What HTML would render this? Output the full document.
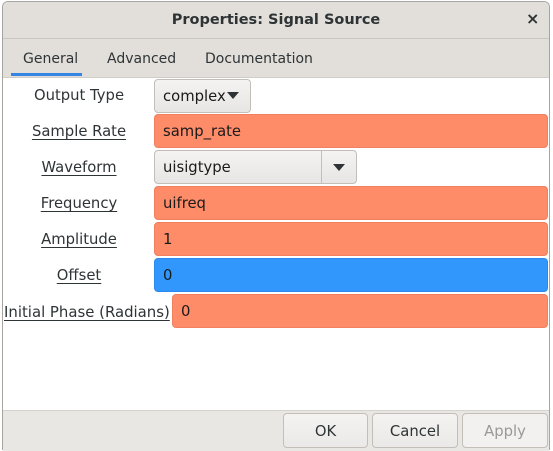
<!DOCTYPE html><html><head><style>
body{margin:0;width:553px;height:451px;background:#fff;font-family:"DejaVu Sans","Liberation Sans",sans-serif;font-size:14.8px;color:#2e3436;position:relative;overflow:hidden}
.a{position:absolute}
.win{left:2px;top:1px;width:548px;height:449px;border:1px solid #a8a5a0;border-radius:6px 6px 0 0;background:#fff;box-sizing:border-box}
.f{position:absolute;height:34px;border-radius:4px;box-sizing:border-box;padding-left:8px;line-height:34px;color:#1a1a1a}
.o{background:#ff8c69;border:1px solid #f08060}
.l{position:absolute;text-decoration:underline;text-underline-offset:3px;text-align:center;width:150px;left:4px}
.btn{position:absolute;top:413px;height:35px;border:1px solid #c3beb8;border-radius:4px;background:linear-gradient(#f4f3f2,#ebe9e7);box-sizing:border-box;text-align:center;line-height:35px}
.t{font-size:14px;top:51px}
</style></head><body>
<div class="a win"></div>
<div class="a" style="left:3px;top:2px;width:546px;height:36px;background:#e2dfdb;border-radius:6px 6px 0 0;border-bottom:1px solid #c9c5c0;text-align:center;line-height:36px;font-weight:bold;font-size:14.5px">Properties: Signal Source</div>
<div class="a" style="left:526px;top:9px;font-weight:bold;font-size:16px">×</div>
<div class="a" style="left:3px;top:39px;width:546px;height:38px;background:#e2dfdb;border-bottom:1px solid #d0ccc7"></div>
<div class="a t" style="left:23px">General</div>
<div class="a" style="left:11px;top:73px;width:71px;height:3px;background:#3584e4"></div>
<div class="a t" style="left:107px">Advanced</div>
<div class="a t" style="left:205px">Documentation</div>
<div class="a" style="left:4px;width:150px;text-align:center;top:87px">Output Type</div>
<div class="f" style="left:154px;top:79px;width:97px;background:linear-gradient(#f4f3f2,#e8e6e4);border:1px solid #c3beb8">complex</div>
<svg class="a" style="left:227px;top:92px" width="12" height="7"><path d="M0 0H12L6 7Z" fill="#2e3436"/></svg>
<div class="l" style="top:123px">Sample Rate</div>
<div class="f o" style="left:154px;top:114px;width:394px">samp_rate</div>
<div class="l" style="top:159px">Waveform</div>
<div class="f" style="left:154px;top:150px;width:203px;background:linear-gradient(#f4f3f2,#e8e6e4);border:1px solid #c3beb8">uisigtype</div>
<div class="a" style="left:321px;top:151px;width:1px;height:32px;background:#c3beb8"></div>
<svg class="a" style="left:333px;top:164px" width="12" height="7"><path d="M0 0H12L6 7Z" fill="#2e3436"/></svg>
<div class="l" style="top:195px">Frequency</div>
<div class="f o" style="left:154px;top:186px;width:394px">uifreq</div>
<div class="l" style="top:231px">Amplitude</div>
<div class="f o" style="left:154px;top:222px;width:394px">1</div>
<div class="l" style="top:267px">Offset</div>
<div class="f" style="left:154px;top:258px;width:394px;background:#3297fd;border:1px solid #2a88ee">0</div>
<div class="a" style="left:4px;top:303px;text-decoration:underline;text-underline-offset:3px;font-size:14.9px">Initial Phase (Radians)</div>
<div class="f o" style="left:172px;top:294px;width:376px">0</div>
<div class="a" style="left:3px;top:410px;width:546px;height:40px;background:#e9e7e4;border-top:1px solid #d6d2cd"></div>
<div class="btn" style="left:283px;width:85px">OK</div>
<div class="btn" style="left:372px;width:86px">Cancel</div>
<div class="btn" style="left:462px;width:86px;color:#999;background:#f2f1f0">Apply</div>
</body></html>
